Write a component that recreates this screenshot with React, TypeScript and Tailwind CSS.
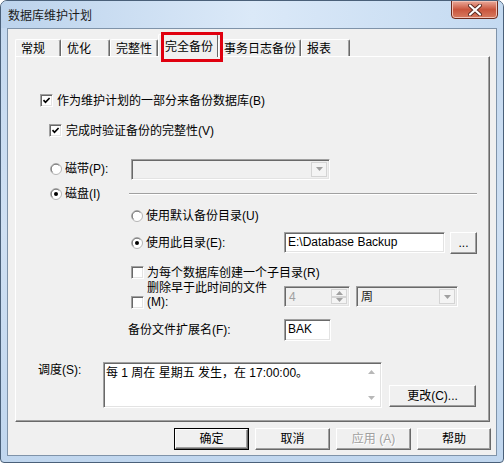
import React from "react";

const sunken =
  "border border-t-[#a0a0a0] border-l-[#a0a0a0] border-b-white border-r-white shadow-[inset_1px_1px_0_#696969,inset_-1px_-1px_0_#e3e3e3]";
const raised =
  "border border-t-white border-l-white border-b-[#696969] border-r-[#696969] shadow-[inset_-1px_-1px_0_#a0a0a0,inset_1px_1px_0_#f0f0f0]";

const Check = ({ checked = false }: { checked?: boolean }) => (
  <div className={`w-[13px] h-[13px] shrink-0 bg-white flex items-center justify-center ${sunken}`}>
    {checked && (
      <svg width="9" height="9" viewBox="0 0 9 9">
        <path d="M1.5 4.2 L3.5 6.3 L7.6 2" fill="none" stroke="#000" strokeWidth="1.7" />
      </svg>
    )}
  </div>
);

const Radio = ({ checked = false }: { checked?: boolean }) => (
  <svg width="12" height="12" viewBox="0 0 12 12" className="shrink-0">
    <circle cx="6" cy="6" r="5.5" fill="#fff" stroke="#b4b4b4" />
    <path d="M2.6 9.4 A4.8 4.8 0 0 1 9.4 2.6" fill="none" stroke="#707070" />
    {checked && <circle cx="6" cy="6" r="2" fill="#000" />}
  </svg>
);

const Arrow = ({ up = false, color = "#a0a0a0" }: { up?: boolean; color?: string }) => (
  <svg width="7" height="4" viewBox="0 0 7 4">
    <path d={up ? "M0 4 L3.5 0 L7 4 Z" : "M0 0 L7 0 L3.5 4 Z"} fill={color} />
  </svg>
);

const Combo = ({ w, text }: { w: string; text?: string }) => (
  <div className={`${w} h-[21px] bg-[#f0f0f0] flex items-stretch p-[2px] ${sunken}`}>
    <div className="flex-1 pl-[2px] text-[#222] leading-[16px]">{text}</div>
    <div className="w-[16px] flex items-center justify-center border border-[#d4d4d4] bg-[#f4f4f4]">
      <Arrow />
    </div>
  </div>
);

const Btn = ({ label, def = false, disabled = false, w = "w-[75px]" }: { label: string; def?: boolean; disabled?: boolean; w?: string }) => (
  <div className={`${w} h-[22px] ${def ? "border border-black" : ""}`}>
    <div
      className={`h-full bg-[#f0f0f0] flex items-center justify-center ${raised} ${
        disabled ? "text-[#a0a0a0] [text-shadow:1px_1px_0_#fff]" : "text-black"
      }`}
    >
      {label}
    </div>
  </div>
);

const tabs = [
  { t: "常规", w: "w-[46px]" },
  { t: "优化", w: "w-[49px]" },
  { t: "完整性", w: "w-[48px]" },
  { t: "完全备份", w: "w-[60px]", sel: true },
  { t: "事务日志备份", w: "w-[83px]" },
  { t: "报表", w: "w-[49px]" },
];

export default function App() {
  return (
    <div className="relative w-[504px] h-[463px] flex flex-col rounded-t-[7px] rounded-b-[4px] border border-[#4a6079] bg-gradient-to-b from-[#c3d8ef] via-[#cfe0f3] to-[#c0d6ee] font-['Liberation_Sans','Noto_Sans_CJK_SC',sans-serif] text-[12px] leading-[14px] text-black overflow-hidden">
      {/* title bar */}
      <div className="h-[27px] shrink-0 flex items-start bg-gradient-to-r from-[#bcd3ec] via-[#dbe9f8] to-[#c4daf1]">
        <div className="pl-[7px] pt-[8px] text-[12px] text-[#1a1a1a]">数据库维护计划</div>
        <div className="ml-auto mr-[5px] w-[47px] h-[19px] -mt-[1px] rounded-b-[4px] border border-[#6e2a1c] bg-gradient-to-b from-[#e9a99a] via-[#c9553d] to-[#d77a60] flex items-center justify-center shadow-[inset_0_0_0_1px_#f3c2b5]">
          <svg width="14" height="12" viewBox="0 0 14 12">
            <path d="M2 1.5 L12 10.5 M12 1.5 L2 10.5" stroke="#5a2a22" strokeWidth="4" strokeLinecap="round" />
            <path d="M2 1.5 L12 10.5 M12 1.5 L2 10.5" stroke="#fff" strokeWidth="2.2" strokeLinecap="round" />
          </svg>
        </div>
      </div>

      {/* client area */}
      <div className="flex-1 mx-[6px] mb-[6px] border border-[#7f93a9] bg-[#f0f0f0] flex flex-col">
        {/* tab strip */}
        <div className="mt-[5px] ml-[7px] h-[22px] flex items-end">
          {tabs.map((tab) =>
            tab.sel ? (
              <div
                key={tab.t}
                className={`${tab.w} h-[23px] -mb-[1px] relative z-10 bg-[#f0f0f0] border-l border-t border-r border-l-white border-t-white border-r-[#696969] rounded-t-[2px] pl-[6px] pt-[5px]`}
              >
                {tab.t}
              </div>
            ) : (
              <div
                key={tab.t}
                className={`${tab.w} h-[17px] border-l border-t border-r border-l-white border-t-white border-r-[#696969] shadow-[inset_-1px_0_0_#a0a0a0] rounded-t-[2px] pl-[5px] pt-[2px]`}
              >
                {tab.t}
              </div>
            )
          )}
        </div>

        {/* tab panel */}
        <div className="ml-[7px] w-[475px] h-[366px] border border-t-white border-l-white border-r-[#696969] border-b-[#696969] shadow-[inset_-1px_-1px_0_#a0a0a0] flex flex-col">
          <div className="mt-[37px] pl-[24px] h-[13px] flex items-center gap-[4px]">
            <Check checked />
            <span>作为维护计划的一部分来备份数据库(B)</span>
          </div>
          <div className="mt-[17px] pl-[33px] h-[13px] flex items-center gap-[4px]">
            <Check checked />
            <span>完成时验证备份的完整性(V)</span>
          </div>

          <div className="mt-[22px] pl-[34px] h-[20px] flex items-center">
            <Radio />
            <span className="ml-[3px] w-[66px]">磁带(P):</span>
            <Combo w="w-[199px]" />
          </div>
          <div className="mt-[7px] pl-[34px] h-[16px] flex items-center">
            <Radio checked />
            <span className="ml-[3px] w-[64px]">磁盘(I)</span>
            <div className="flex-1 mr-[12px] border-t border-t-[#a0a0a0] border-b border-b-white" />
          </div>

          <div className="mt-[6px] pl-[115px] h-[16px] flex items-center">
            <Radio />
            <span className="ml-[3px]">使用默认备份目录(U)</span>
          </div>
          <div className="mt-[8px] pl-[115px] h-[21px] flex items-center">
            <Radio checked />
            <span className="ml-[3px] w-[138px]">使用此目录(E):</span>
            <div className={`w-[161px] h-[21px] bg-white pl-[3px] leading-[19px] ${sunken}`}>E:\Database Backup</div>
            <div className="ml-[5px]">
              <Btn label="..." w="w-[27px]" />
            </div>
          </div>

          <div className="mt-[13px] pl-[115px] h-[13px] flex items-center gap-[3px]">
            <Check />
            <span>为每个数据库创建一个子目录(R)</span>
          </div>

          <div className="mt-[7px] pl-[115px] h-[22px] flex items-start">
            <div className="mt-[10px]">
              <Check />
            </div>
            <div className="ml-[3px] w-[137px] flex flex-col -mt-[5px]">
              <span className="leading-[14px]">删除早于此时间的文件</span>
              <span className="leading-[14px]">(M):</span>
            </div>
            <div className={`w-[66px] h-[21px] bg-[#f0f0f0] flex items-stretch p-[2px] ${sunken}`}>
              <div className="flex-1 pl-[2px] text-[#a0a0a0] leading-[16px]">4</div>
              <div className="w-[16px] flex flex-col">
                <div className="flex-1 flex items-center justify-center border border-[#d4d4d4] bg-[#f4f4f4]">
                  <Arrow up />
                </div>
                <div className="flex-1 flex items-center justify-center border border-[#d4d4d4] bg-[#f4f4f4]">
                  <Arrow />
                </div>
              </div>
            </div>
            <div className="ml-[6px]">
              <Combo w="w-[102px]" text="周" />
            </div>
          </div>

          <div className="mt-[11px] pl-[112px] h-[22px] flex items-center">
            <span className="w-[156px]">备份文件扩展名(F):</span>
            <div className={`w-[47px] h-[22px] bg-white pl-[3px] leading-[19px] ${sunken}`}>BAK</div>
          </div>

          <div className="mt-[21px] pl-[22px] h-[46px] flex items-start">
            <span className="w-[65px] pt-[1px]">调度(S):</span>
            <div className={`w-[279px] h-[46px] bg-white flex ${sunken}`}>
              <div className="flex-1 pl-[2px] pt-[3px]">每 1 周在 星期五 发生，在 17:00:00。</div>
              <div className="w-[17px] flex flex-col justify-between items-center py-[7px] mr-[1px]">
                <Arrow up color="#b8b8b8" />
                <Arrow color="#b8b8b8" />
              </div>
            </div>
            <div className="ml-[7px] self-end mb-[1px]">
              <Btn label="更改(C)..." w="w-[87px]" />
            </div>
          </div>
        </div>

        {/* dialog buttons */}
        <div className="mt-[6px] pr-[5px] flex justify-end gap-[6px]">
          <Btn label="确定" def />
          <Btn label="取消" />
          <Btn label="应用 (A)" disabled />
          <Btn label="帮助" w="w-[74px]" />
        </div>
      </div>

      {/* red highlight around the selected tab */}
      <div className="absolute left-[160px] top-[31px] w-[62px] h-[30px] border-[3px] border-[#e0000f] z-20" />
    </div>
  );
}
